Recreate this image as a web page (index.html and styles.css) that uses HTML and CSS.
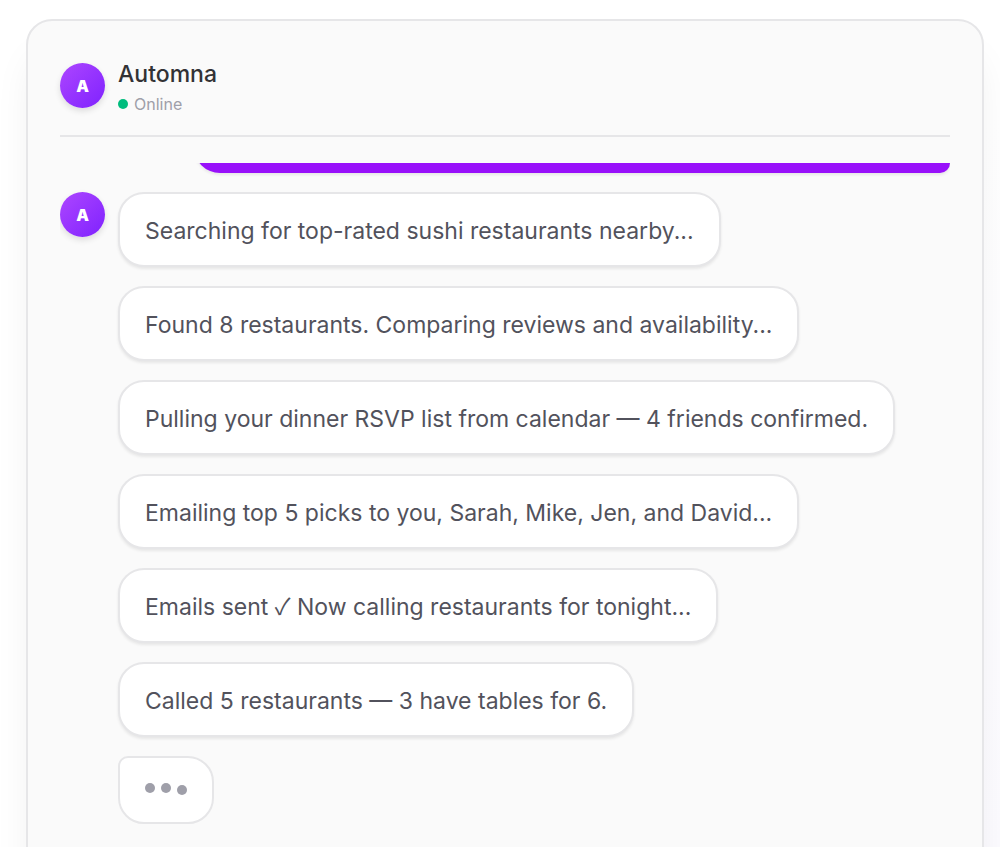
FILE: index.html
```
<!DOCTYPE html>
<html lang="en">
<head>
    <meta charset="UTF-8">
    <meta name="viewport" content="width=device-width, initial-scale=1.0">
    <title>Automna</title>
    <link rel="stylesheet" href="styles.css">
</head>
<body>
    <main class="chat-card">
        <header class="chat-header">
            <div class="avatar">A</div>
            <div class="chat-info">
                <h1 class="chat-name">Automna</h1>
                <div class="chat-status"><span class="status-dot"></span>Online</div>
            </div>
        </header>

        <div class="messages">
            <div class="bubble bubble-user"></div>
            <div class="reply">
                <div class="avatar">A</div>
                <div class="reply-list">
                    <p class="bubble">Searching for top-rated sushi restaurants nearby...</p>
                    <p class="bubble">Found 8 restaurants. Comparing reviews and availability...</p>
                    <p class="bubble">Pulling your dinner RSVP list from calendar — 4 friends confirmed.</p>
                    <p class="bubble">Emailing top 5 picks to you, Sarah, Mike, Jen, and David...</p>
                    <p class="bubble">Emails sent <span class="check">✓</span> Now calling restaurants for tonight...</p>
                    <p class="bubble">Called 5 restaurants — 3 have tables for 6.</p>
                    <div class="bubble bubble-typing">
                        <span class="dot dot-up"></span>
                        <span class="dot dot-up"></span>
                        <span class="dot"></span>
                    </div>
                </div>
            </div>
        </div>
    </main>
</body>
</html>
```
FILE: styles.css
```
* {
    box-sizing: border-box;
}
body {
    font-family: Inter, "Liberation Sans", sans-serif;
    background: linear-gradient(135deg, #ffffff 60%, #fcfbff);
    margin: 0;
    padding: 19px 16px 0 26px;
    height: 100vh;
    overflow: hidden;
}
.chat-card {
    min-height: 120vh;
    padding: 42px 32px;
    background: #fafafa;
    border: 2px solid #e6e6e8;
    border-radius: 26px;
    box-shadow: 0 32px 40px -8px rgba(0, 0, 0, 0.08);
}

/* Header */
.chat-header {
    display: flex;
    align-items: flex-start;
    gap: 13px;
    padding-bottom: 19px;
    border-bottom: 2px solid #e6e6e8;
}
.avatar {
    display: flex;
    align-items: center;
    justify-content: center;
    flex-shrink: 0;
    width: 45px;
    height: 45px;
    border-radius: 50%;
    background: linear-gradient(135deg, #ad46ff, #7f22fe);
    color: #fff;
    font-size: 16px;
    font-weight: 900;
    box-shadow: 0 3px 6px rgba(0, 0, 0, 0.12);
}
.chat-name {
    margin: 0;
    color: #323235;
    font-size: 23px;
    font-weight: 500;
    line-height: 22px;
}
.chat-status {
    display: flex;
    align-items: center;
    gap: 6px;
    margin-top: 7px;
    color: #9f9fa9;
    font-size: 16px;
    line-height: 24px;
}
.status-dot {
    width: 10px;
    height: 10px;
    border-radius: 50%;
    background: #00bc7d;
}

/* Messages */
.messages {
    display: flex;
    flex-direction: column;
    gap: 19px;
    margin-top: 26px;
    overflow: hidden;
}
.reply {
    display: flex;
    align-items: flex-start;
    gap: 13px;
}
.reply-list {
    display: flex;
    flex-direction: column;
    align-items: flex-start;
    gap: 19px;
    padding-bottom: 19px;
}
.bubble {
    margin: 0;
    padding: 20px 25px 16px;
    background: #fff;
    border: 2px solid #e6e6e8;
    border-radius: 26px;
    color: #52525c;
    font-size: 23px;
    line-height: 35px;
    box-shadow: 0 2px 3px rgba(0, 0, 0, 0.08);
}
/* scrolled up, only the bottom edge stays in view */
.bubble-user {
    align-self: flex-end;
    width: 85%;
    height: 75px;
    margin-top: -65px;
    background: #9810fa;
    border: none;
    border-bottom-right-radius: 10px;
}
.bubble-typing {
    display: flex;
    gap: 6px;
    padding: 27px 25px;
    border-top-left-radius: 10px;
    box-shadow: none;
}
.check {
    font-family: "Noto Sans CJK JP", sans-serif;
    line-height: 1;
}
.dot {
    width: 10px;
    height: 10px;
    border-radius: 50%;
    background: #9f9fa9;
}
.dot-up {
    transform: translateY(-2px);
}
```
